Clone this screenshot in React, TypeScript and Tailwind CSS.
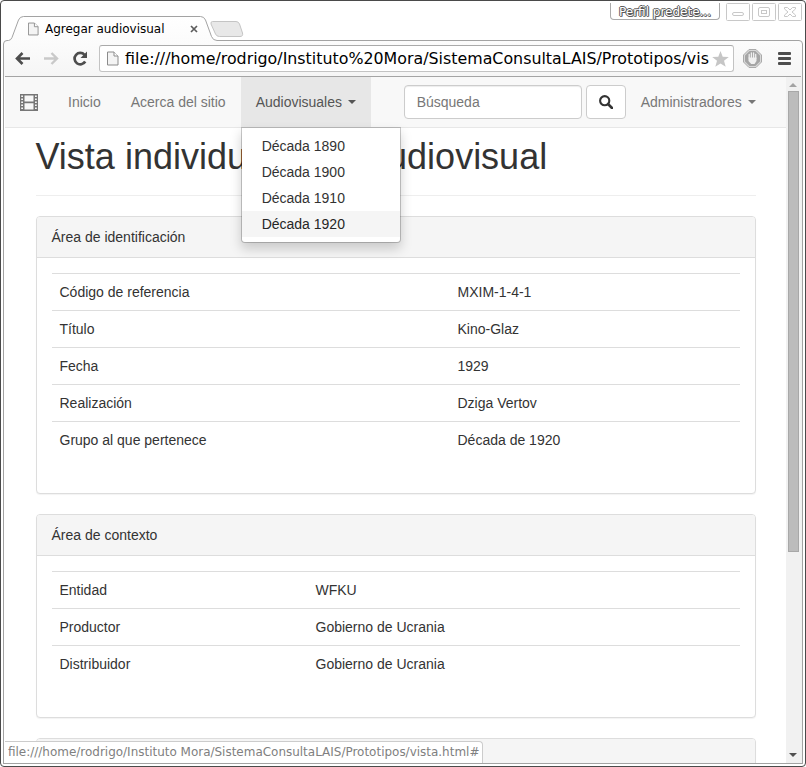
import React from 'react';

type Row = [string, string];

const identification: Row[] = [
  ['Código de referencia', 'MXIM-1-4-1'],
  ['Título', 'Kino-Glaz'],
  ['Fecha', '1929'],
  ['Realización', 'Dziga Vertov'],
  ['Grupo al que pertenece', 'Década de 1920'],
];

const context: Row[] = [
  ['Entidad', 'WFKU'],
  ['Productor', 'Gobierno de Ucrania'],
  ['Distribuidor', 'Gobierno de Ucrania'],
];

const decades = ['Década 1890', 'Década 1900', 'Década 1910', 'Década 1920'];

function PageIcon({ className }: { className: string }) {
  return (
    <svg className={className} viewBox="0 0 12 14" fill="#f4f4f4" stroke="#8c8c8c">
      <path d="M.5.5h6.5l4 4v9H.5z" />
      <path d="M7 .5v4h4" fill="#fff" />
    </svg>
  );
}

function Caret() {
  return <span className="ml-[6px] h-0 w-0 border-x-4 border-t-4 border-x-transparent border-t-current" />;
}

/* Outline shared by the active tab and the toolbar below it */
function Frame() {
  return (
    <svg className="absolute left-0 top-0" width="806" height="77" viewBox="0 0 806 77">
      <defs>
        <linearGradient id="chrome" x1="0" y1="0" x2="0" y2="1">
          <stop offset="0" stopColor="#ffffff" />
          <stop offset="0.45" stopColor="#fbfbfb" />
          <stop offset="1" stopColor="#f5f5f5" />
        </linearGradient>
      </defs>
      <path
        d="M3.500 78V44Q3.500 40.500 7 40.500H8.500Q11 40.200 12 37.500L18.500 20Q20 16.500 23.500 16.500H200.500Q204 16.500 205.500 20L211.500 36.500Q213 40.500 217 40.500H799Q802.500 40.500 802.500 44V78"
        fill="url(#chrome)"
        stroke="#a3a3a3"
      />
      <path d="M212.500 21.500H236Q238.500 21.500 239.500 24L242.500 33Q243.300 36.500 240 36.500H219.500Q216.500 36.500 215.500 34L211 24Q210.500 21.500 212.500 21.500Z" fill="#e8e8e8" stroke="#c4c4c4" />
    </svg>
  );
}

function TitleBar() {
  return (
    <div className="relative flex h-[41px] justify-between">
      <div className="flex h-6 w-[200px] items-center pl-7 pt-0 mt-[17px] text-[12px] text-black">
        <PageIcon className="h-[14px] w-[11px]" />
        <span className="ml-[6px] w-[145px] whitespace-nowrap tracking-[-0.02px]">Agregar audiovisual</span>
        <svg className="shrink-0" width="8" height="8" viewBox="0 0 8 8" stroke="#5c5c5c" strokeWidth="1.700">
          <path d="M1 1l6 6M7 1L1 7" />
        </svg>
      </div>
      <div className="mr-[4px] mt-[3px] flex items-start">
        <div className="mr-[6px] h-[17px] w-[110px] rounded-b-[4px] border border-t-0 border-[#aaa] text-center text-[12px] leading-[18px] text-white [text-shadow:-1px_0_#5a5a5a,1px_0_#5a5a5a,0_-1px_#5a5a5a,0_1px_#5a5a5a,1px_1px_#777]">
          Perfil predete...
        </div>
        <svg width="76" height="18" fill="none" stroke="#c8c8c8">
          <rect x=".5" y=".5" width="23" height="17" rx="1" />
          <rect x="6.500" y="9.500" width="11" height="3" rx="1.500" />
          <rect x="26.500" y=".5" width="23" height="17" rx="1" />
          <rect x="32.500" y="4.500" width="11" height="9" rx="1.500" />
          <rect x="35.500" y="7.500" width="5" height="3" />
          <rect x="52.500" y=".5" width="23" height="17" rx="1" />
          <path d="M58.500 4.500h3l2.500 2.500 2.500-2.500h3v1.500l-3.500 3 3.500 3v1.500h-3L64 11l-2.500 2.500h-3V12l3.500-3-3.500-3z" />
        </svg>
      </div>
    </div>
  );
}

function ToolBar() {
  return (
    <div className="relative flex h-9 items-center border-b border-[#a4a4a4] mx-[5px]">
      <svg className="ml-[10px]" width="15" height="13" fill="none" stroke="#4d4d4d" strokeWidth="2.600">
        <path d="M7.500 1L2 6.500 7.500 12M2 6.500h13" />
      </svg>
      <svg className="ml-[14px]" width="15" height="13" fill="none" stroke="#c9c9c9" strokeWidth="2.400">
        <path d="M7.500 1L13 6.500 7.500 12M13 6.500H0" />
      </svg>
      <svg className="ml-[13px] mr-px" width="16" height="16" fill="none">
        <path d="M12.500 3.800A5.700 5.700 0 1 0 13.200 10.500" stroke="#4d4d4d" strokeWidth="2.700" />
        <path d="M15 .5V7H8.500z" fill="#4d4d4d" />
      </svg>
      <div className="ml-[10px] flex h-[27px] w-[635px] items-center rounded-[3px] border border-[#c3c3c3] border-t-[#aaa] bg-white pl-[7px]">
        <PageIcon className="h-[15px] w-3 shrink-0" />
        <span className="ml-[6px] w-[584px] whitespace-nowrap text-[15.85px] leading-6 text-black">
          file:///home/rodrigo/Instituto%20Mora/SistemaConsultaLAIS/Prototipos/vis
        </span>
        <svg className="ml-[3px] shrink-0" width="17" height="16" viewBox="0 0 17 16" fill="#c6c6c6">
          <path d="M8.500 0l2.200 5.700 6.100.3L12 9.800l1.700 6-5.200-3.400-5.200 3.400 1.700-6L.2 6l6.100-.3z" />
        </svg>
      </div>
      <svg className="ml-[9px]" width="19" height="19" viewBox="0 0 19 19">
        <path d="M6 .5h7L18.500 6v7L13 18.500H6L.5 13V6z" fill="#d8d8d8" stroke="#aaa" />
        <path d="M6.600 2h5.800L17 6.600v5.800L12.400 17H6.600L2 12.400V6.600z" fill="#a5a5a5" />
        <path d="M6.200 9V5.500M8.400 8.500V3.800M10.600 8.500V4M12.700 9.500V5.500" stroke="#f0f0f0" strokeWidth="1.300" strokeLinecap="round" />
        <path d="M5.500 8.500h8v3.500l-2 3h-3.300l-2.700-3z" fill="#f0f0f0" />
      </svg>
      <svg className="ml-4" width="13" height="13" fill="#4d4d4d">
        <rect width="13" height="3" rx="1" />
        <rect y="5" width="13" height="3" rx="1" />
        <rect y="10" width="13" height="3" rx="1" />
      </svg>
    </div>
  );
}

function NavBar() {
  return (
    <nav className="flex h-[51px] items-center border-b border-[#e7e7e7] bg-[#f8f8f8] text-[#777]">
      <svg className="ml-[15px] shrink-0" width="18" height="17" viewBox="0 0 18 17">
        <path
          fill="#777"
          fillRule="evenodd"
          d="M0 0h18v17H0zM1.200 1.500v1.500h1.800V1.500zm0 3v1.500h1.800V4.500zm0 3V9h1.800V7.500zm0 3V12h1.800v-1.500zm0 3V15h1.800v-1.500zM15 1.500v1.500h1.800V1.500zm0 3v1.500h1.800V4.500zm0 3V9h1.800V7.500zm0 3V12h1.800v-1.500zm0 3V15h1.800v-1.500zM4.500 1.500v6h9v-6zM4.500 9.300v6.200h9V9.300z"
        />
      </svg>
      <span className="ml-[30px]">Inicio</span>
      <span className="ml-[30px]">Acerca del sitio</span>
      <div className="relative ml-[15px] flex h-[50px] w-[130px] items-center bg-[#e7e7e7] pl-[15px] text-[#555]">
        Audiovisuales
        <Caret />
        <ul className="absolute left-0 top-[50px] z-10 w-40 rounded-b-[4px] border border-black/20 bg-white bg-clip-padding py-[5px] text-[#333] shadow-[0_6px_12px_rgba(0,0,0,0.175)]">
          {decades.map((d) => (
            <li key={d} className="h-[26px] pl-5 leading-[26px] last:bg-[#f5f5f5] last:text-[#262626]">
              {d}
            </li>
          ))}
        </ul>
      </div>
      <div className="ml-[33px] flex h-[34px] w-[178px] items-center rounded-[4px] border border-[#ccc] bg-white pl-3 shadow-[inset_0_1px_1px_rgba(0,0,0,0.075)]">
        Búsqueda
      </div>
      <div className="ml-1 flex h-[34px] w-10 items-center justify-center rounded-[4px] border border-[#ccc] bg-white">
        <svg width="14" height="14" fill="none" stroke="#333">
          <circle cx="5.700" cy="5.700" r="4.600" strokeWidth="2.100" />
          <path d="M9 9l4 4" strokeWidth="2.600" strokeLinecap="round" />
        </svg>
      </div>
      <span className="ml-[15px]">Administradores</span>
      <Caret />
    </nav>
  );
}

function Panel({ title, rows, split }: { title: string; rows: Row[]; split: string }) {
  return (
    <section className="mb-5 rounded-[4px] border border-[#ddd] bg-white shadow-[0_1px_1px_rgba(0,0,0,0.05)]">
      <h3 className="h-[41px] rounded-t-[3px] border-b border-[#ddd] bg-[#f5f5f5] pl-[14.5px] leading-10">{title}</h3>
      <div className="px-[15px] pb-[35px] pt-[15px]">
        {rows.map(([k, v]) => (
          <div key={k} className="flex h-[37px] border-t border-[#ddd] leading-9">
            <span className={split}>{k}</span>
            <span>{v}</span>
          </div>
        ))}
      </div>
    </section>
  );
}

function ScrollBar() {
  return (
    <div className="flex w-4 flex-col bg-[#f1f1f1]">
      <span className="ml-[3px] mt-[6px] h-0 w-0 border-x-4 border-b-4 border-x-transparent border-b-[#a3a3a3]" />
      <span className="ml-[2px] mt-1 h-[461px] w-[11px] border border-[#a8a8a8] bg-[#bcbcbc]" />
      <span className="mb-[6px] ml-[3px] mt-auto h-0 w-0 border-x-4 border-t-4 border-x-transparent border-t-[#505050]" />
    </div>
  );
}

export default function App() {
  return (
    <div className="relative h-[767px] w-[806px] overflow-hidden bg-white font-['DejaVu_Sans',sans-serif]">
      <Frame />
      <TitleBar />
      <ToolBar />
      <div className="flex h-[687px] border-x border-b border-[#a3a3a3] mx-[3px] pl-px">
        <main className="relative w-[781px] shrink-0 overflow-hidden font-['Liberation_Sans',Arial,sans-serif] text-[14px] leading-5 text-[#333]">
          <NavBar />
          <div className="ml-[31px] w-[720px]">
            <h1 className="mb-5 h-[68px] border-b border-[#eee] pt-[9px] text-[36px] leading-[40px]">
              <span className="-ml-[0.5px]">Vista individual para audiovisual</span>
            </h1>
            <Panel title="Área de identificación" rows={identification} split="w-[405.5px] pl-[7.5px]" />
            <Panel title="Área de contexto" rows={context} split="w-[263.5px] pl-[7.5px]" />
            <Panel title="" rows={[]} split="" />
          </div>
          <div className="absolute bottom-0 left-0 h-[22px] w-[478px] whitespace-nowrap rounded-tr-[4px] border-r border-t border-[#ccc] bg-white pl-[3px] font-['DejaVu_Sans',sans-serif] text-[11.98px] leading-5 text-[#808080]">
            file:///home/rodrigo/Instituto Mora/SistemaConsultaLAIS/Prototipos/vista.html#
          </div>
        </main>
        <ScrollBar />
      </div>
      <div className="pointer-events-none absolute inset-0 rounded-[4px] border border-[#4a4a4a]" />
    </div>
  );
}
